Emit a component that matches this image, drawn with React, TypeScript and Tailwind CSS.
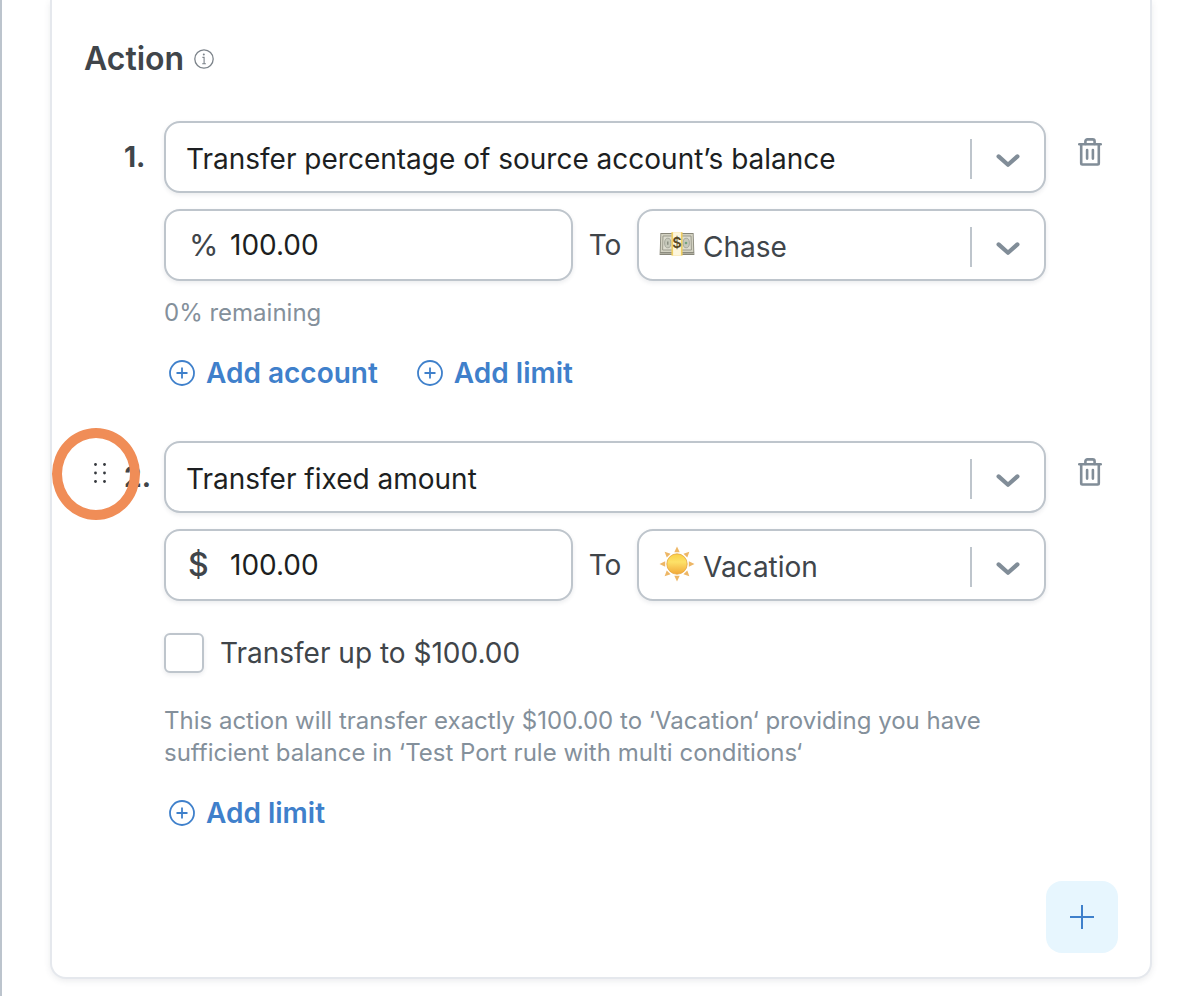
import type { ReactNode } from "react";

const FONT = "font-['Inter','Liberation_Sans',sans-serif]";

function ChevronIcon() {
  return (
    <svg width="24" height="16" viewBox="0 0 24 16" fill="none" stroke="#818d98" strokeWidth="4.2" strokeLinecap="round" strokeLinejoin="round">
      <path d="M2.6 3.4 12 11.8 21.4 3.4" />
    </svg>
  );
}

function TrashIcon() {
  return (
    <svg width="24" height="28" viewBox="0 0 24 28" fill="none" stroke="#818d98" strokeWidth="2.6" strokeLinecap="round" strokeLinejoin="round">
      <path d="M1.3 6.3h21.4" />
      <path d="M3.2 6.4v18.9a1.2 1.2 0 0 0 1.2 1.2h15.2a1.2 1.2 0 0 0 1.2-1.2V6.4" />
      <path d="M7.4 6V3.4a2 2 0 0 1 2-2h5.2a2 2 0 0 1 2 2V6" />
      <path d="M9.1 12v8.6M14.9 12v8.6" />
    </svg>
  );
}

function InfoIcon() {
  return (
    <svg width="20" height="20" viewBox="0 0 20 20" fill="none" stroke="#7c838a" strokeWidth="1.3">
      <circle cx="10" cy="10" r="9.2" />
      <path d="M8.4 8.4h1.7v6.2M8.2 14.8h3.7" strokeWidth="1.1" />
      <circle cx="9.8" cy="5.6" r="1" fill="#7c838a" stroke="none" />
    </svg>
  );
}

function PlusCircleIcon() {
  return (
    <svg width="26" height="26" viewBox="0 0 26 26" fill="none" stroke="#3f80cb" strokeWidth="1.8">
      <circle cx="13" cy="13" r="12" />
      <path d="M13 7.5v11M7.5 13h11" />
    </svg>
  );
}

function MoneyIcon() {
  return (
    <svg width="36" height="24" viewBox="0 0 36 24">
      <path d="M1.4 1h33.2l.8 22H.6z" fill="#88877a" />
      <path d="M2.2 2h31.6l.6 18H1.6z" fill="#d3d2c2" />
      <path d="M4 4h28l.4 14H3.6z" fill="#dddccf" stroke="#9b9b8d" strokeWidth="1" />
      <path d="M1 21.4h34" stroke="#c0bfb0" strokeWidth=".8" />
      <ellipse cx="8.8" cy="11" rx="3.2" ry="4.8" fill="#c6c8ba" stroke="#94978a" strokeWidth=".7" />
      <ellipse cx="27.2" cy="11" rx="3.2" ry="4.8" fill="#c6c8ba" stroke="#94978a" strokeWidth=".7" />
      <path d="M8.8 9.4v3.4" stroke="#7b8074" strokeWidth="1.2" />
      <circle cx="27" cy="11" r="1.3" fill="#74a27d" />
      <path d="M12.4 .2h11.2v23.4H12.4z" fill="#efce62" />
      <path d="M14.1 .2h7.8v23.4h-7.8z" fill="#fdf6dc" />
      <text x="18" y="16" textAnchor="middle" fontSize="14.5" fontWeight="600" fill="#5a4b28" className="font-['Inter',sans-serif]">
        $
      </text>
    </svg>
  );
}

function SunIcon() {
  return (
    <svg width="36" height="36" viewBox="0 0 36 36">
      <defs>
        <linearGradient id="sun-body" x1="0" y1="0" x2="0" y2="1">
          <stop offset="0" stopColor="#f9cf45" />
          <stop offset=".4" stopColor="#fde168" />
          <stop offset="1" stopColor="#f2a838" />
        </linearGradient>
      </defs>
      {[0, 45, 90, 135, 180, 225, 270, 315].map((angle) => (
        <path key={angle} d="M18 .5 20.7 6.2h-5.4z" fill="#edb665" transform={`rotate(${angle} 18 18)`} />
      ))}
      <circle cx="18" cy="18" r="10.2" fill="url(#sun-body)" stroke="#e5a53c" strokeWidth=".8" />
    </svg>
  );
}

function DragHandleIcon() {
  return (
    <svg width="14" height="22" viewBox="0 0 14 22" fill="#34383d">
      {[2.5, 11.5].map((x) => [2.5, 11, 19.5].map((y) => <circle key={`${x}-${y}`} cx={x} cy={y} r="1.4" />))}
    </svg>
  );
}

const box = "flex h-[72px] items-center rounded-2xl border-2 border-[#bec5cc] bg-white shadow-[0_2px_4px_rgba(60,70,90,0.10)]";

function Select({ className, children }: { className: string; children: ReactNode }) {
  return (
    <div className={`${box} pt-1 ${className}`}>
      <div className="flex flex-1 items-center">{children}</div>
      <div className="h-10 w-0.5 bg-[#bec5cc]" />
      <div className="flex w-[72px] justify-center pt-1">
        <ChevronIcon />
      </div>
    </div>
  );
}

function AmountRow({ symbol, icon, account }: { symbol: ReactNode; icon: ReactNode; account: string }) {
  return (
    <div className="mt-4 flex items-center">
      <div className={`${box} w-[409px] text-[28px] text-[#1d1f22]`}>
        <div className="w-16 pl-[22px] text-[#40454a]">{symbol}</div>
        <span>100.00</span>
      </div>
      <span className="w-16 text-center text-[28px] text-[#40454a]">To</span>
      <Select className="w-[409px] text-[28px] text-[#40454a]">
        <div className="mb-[7px] ml-5 flex h-9 w-9 items-center">{icon}</div>
        <span className="ml-2">{account}</span>
      </Select>
    </div>
  );
}

function AddLink({ children }: { children: ReactNode }) {
  return (
    <button className="flex h-10 items-center gap-[11px] text-[28px] font-semibold text-[#3f80cb]">
      <PlusCircleIcon />
      <span>{children}</span>
    </button>
  );
}

export default function App() {
  return (
    <div className={`${FONT} h-[996px] overflow-hidden border-l-2 border-[#bcc4cd] bg-white pl-12`}>
      <section className="h-[979px] w-[1102px] rounded-b-2xl border-2 border-t-0 border-[#e5e8ed] bg-white px-8 pt-[34px] shadow-[0_2px_6px_rgba(60,70,90,0.10)]">
        <header className="flex h-[50px] items-center gap-2.5">
          <h2 className="text-[32px] font-semibold text-[#40454a]">Action</h2>
          <InfoIcon />
        </header>

        <div className="mt-[37px] flex h-80">
          <div className="w-20 pt-4 pl-10 text-[28px] leading-10 font-bold text-[#40454a]">1.</div>
          <div className="w-[882px]">
            <Select className="text-[28px] text-[#1d1f22]">
              <span className="ml-5">Transfer percentage of source account’s balance</span>
            </Select>
            <AmountRow symbol={<span className="ml-px text-[30px]">%</span>} icon={<MoneyIcon />} account="Chase" />
            <p className="mt-4 text-2xl leading-8 text-[#84909b]">0% remaining</p>
            <div className="mt-6 ml-[5px] flex gap-[39px]">
              <AddLink>Add account</AddLink>
              <AddLink>Add limit</AddLink>
            </div>
          </div>
          <button className="ml-8 h-7 pt-[17px]">
            <TrashIcon />
          </button>
        </div>

        <div className="flex h-[440px]">
          <div className="relative w-20 pt-4 pl-10 text-[28px] leading-10 font-bold text-[#40454a]">
            2.
            <div className="absolute top-[-13px] left-[-32px] h-[92px] w-[88px] rounded-[50%] border-[10px] border-[#f08d57]" />
            <div className="absolute top-[21px] left-[9px]">
              <DragHandleIcon />
            </div>
          </div>
          <div className="w-[882px]">
            <Select className="text-[28px] text-[#1d1f22]">
              <span className="ml-5">Transfer fixed amount</span>
            </Select>
            <AmountRow symbol={<span className="text-[32px] font-medium">$</span>} icon={<SunIcon />} account="Vacation" />
            <label className="mt-8 flex h-10 items-center gap-4 text-[28px] text-[#40454a]">
              <span className="h-10 w-10 rounded-md border-2 border-[#bec5cc] bg-white shadow-[0_2px_4px_rgba(60,70,90,0.10)]" />
              Transfer up to $100.00
            </label>
            <p className="mt-8 text-2xl leading-8 whitespace-nowrap text-[#84909b]">
              This action will transfer exactly $100.00 to ‘Vacation‘ providing you have
              <br />
              sufficient balance in ‘Test Port rule with multi conditions‘
            </p>
            <div className="mt-6 ml-[5px]">
              <AddLink>Add limit</AddLink>
            </div>
          </div>
          <button className="ml-8 h-7 pt-[17px]">
            <TrashIcon />
          </button>
        </div>

        <div className="flex justify-end">
          <button className="flex h-[72px] w-[72px] items-center justify-center rounded-2xl bg-[#e7f6fe]">
            <svg width="24" height="24" viewBox="0 0 24 24" stroke="#3f80cb" strokeWidth="2">
              <path d="M12 0v24M0 12h24" />
            </svg>
          </button>
        </div>
      </section>
    </div>
  );
}
